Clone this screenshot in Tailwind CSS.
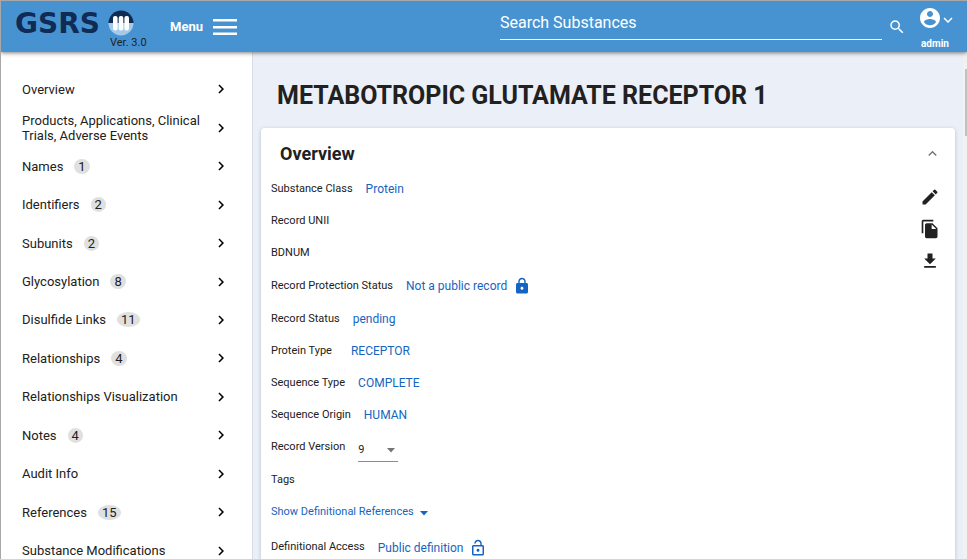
<!DOCTYPE html>
<html lang="en">
<head>
<meta charset="utf-8">
<meta name="viewport" content="width=device-width, initial-scale=1">
<title>GSRS - Metabotropic Glutamate Receptor 1</title>
<script src="https://cdn.jsdelivr.net/npm/@tailwindcss/browser@4"></script>
</head>
<body class="flex h-screen flex-col overflow-hidden border-t border-l border-[#a8a8a8] bg-[#ebeff7] font-['Roboto',sans-serif] text-[13px] text-[#212121]">
<svg class="hidden" aria-hidden="true">
  <symbol id="chevron" viewBox="0 0 24 24"><path d="M10 6 8.59 7.41 13.17 12l-4.58 4.59L10 18l6-6z"/></symbol>
</svg>
<header class="relative z-10 flex h-[51px] shrink-0 bg-[#4793d1] pr-[7px] pl-[14px] text-white shadow-[0_1px_4px_rgba(0,0,0,0.5)]">
  <a href="#" class="flex w-[155px] flex-col text-[#102b54]">
    <span class="flex h-[36px] items-center gap-[8px] pt-[7px]">
      <span class="pt-[2px] font-['DejaVu_Sans',sans-serif] text-[28px] leading-[30px] font-bold">GSRS</span>
      <svg class="size-[26px]" viewBox="0 0 26 26" aria-hidden="true">
        <path d="M0.5 13a12.5 12.5 0 0 1 25 0z" fill="#102b54"/>
        <path d="M0.5 13a12.5 12.5 0 0 0 25 0z" fill="#a3cae8"/>
        <g fill="#fff"><rect x="5" y="6" width="4.6" height="14.5" rx="2"/><rect x="10.7" y="6" width="4.6" height="14.5" rx="2"/><rect x="16.4" y="6" width="4.6" height="14.5" rx="2"/></g>
      </svg>
    </span>
    <span class="pl-[95px] text-[11px] leading-[12px] text-[#212121]">Ver. 3.0</span>
  </a>
  <button type="button" class="flex items-center gap-[10px] text-[13px] font-bold">Menu
    <svg class="h-[18px] w-6" viewBox="0 0 24 18" fill="#fff" aria-hidden="true"><path d="M0 1h24v2.500H0zM0 8h24v2.500H0zM0 14.500h24v2.500H0z"/></svg>
  </button>
  <form class="ml-auto flex w-[407px] items-start gap-[6px] pt-[9px]">
    <input type="search" aria-label="Search Substances" placeholder="Search Substances" class="h-[30px] min-w-0 flex-1 border-b border-white bg-transparent pb-[5px] text-[16px] text-white outline-none placeholder:text-white">
    <button type="submit" aria-label="Search" class="mt-[8px] mr-px">
      <svg class="size-[18px]" viewBox="0 0 24 24" fill="#fff"><path d="M15.5 14h-.79l-.28-.27A6.47 6.47 0 0 0 16 9.5 6.5 6.5 0 1 0 9.5 16c1.61 0 3.09-.59 4.23-1.57l.27.28v.79l5 4.99L20.49 19zm-6 0C7.01 14 5 11.99 5 9.5S7.01 5 9.5 5 14 7.01 14 9.5 11.99 14 9.5 14"/></svg>
    </button>
  </form>
  <button type="button" class="ml-[11px] flex w-[42px] flex-col items-start pt-[5px]">
    <span class="flex items-center">
      <svg class="size-6" viewBox="0 0 24 24" fill="#fff" aria-hidden="true"><path d="M12 2C6.48 2 2 6.48 2 12s4.48 10 10 10 10-4.48 10-10S17.52 2 12 2m0 3c1.66 0 3 1.34 3 3s-1.34 3-3 3-3-1.34-3-3 1.34-3 3-3m0 14.2a7.2 7.2 0 0 1-6-3.22c.03-1.99 4-3.08 6-3.08 1.99 0 5.97 1.09 6 3.08a7.2 7.2 0 0 1-6 3.22"/></svg>
      <svg class="mt-[4px] -ml-[3px] size-[18px] rotate-90" fill="#fff" aria-hidden="true"><use href="#chevron"/></svg>
    </span>
    <span class="pt-[7px] pl-[3px] text-[10px] leading-[14px] font-bold">admin</span>
  </button>
</header>
<div class="flex min-h-0 flex-1">
  <aside class="w-[252px] shrink-0 overflow-hidden border-r border-[#d8dce4] bg-white">
    <nav aria-label="Record sections" class="mt-[18px] grid h-[500px] auto-rows-fr pr-[22px] pl-[21px] leading-[15px]">
      <a href="#" class="flex items-center">Overview<svg class="ml-auto size-[18px]" aria-hidden="true"><use href="#chevron"/></svg></a>
      <a href="#" class="flex items-center"><span class="w-[180px]">Products, Applications, Clinical Trials, Adverse Events</span><svg class="ml-auto size-[18px]" aria-hidden="true"><use href="#chevron"/></svg></a>
      <a href="#" class="flex items-center gap-[11px]">Names<span class="rounded-[50%] bg-[#e0e0e0] px-1">1</span><svg class="ml-auto size-[18px]" aria-hidden="true"><use href="#chevron"/></svg></a>
      <a href="#" class="flex items-center gap-[11px]">Identifiers<span class="rounded-[50%] bg-[#e0e0e0] px-1">2</span><svg class="ml-auto size-[18px]" aria-hidden="true"><use href="#chevron"/></svg></a>
      <a href="#" class="flex items-center gap-[11px]">Subunits<span class="rounded-[50%] bg-[#e0e0e0] px-1">2</span><svg class="ml-auto size-[18px]" aria-hidden="true"><use href="#chevron"/></svg></a>
      <a href="#" class="flex items-center gap-[11px]">Glycosylation<span class="rounded-[50%] bg-[#e0e0e0] px-1">8</span><svg class="ml-auto size-[18px]" aria-hidden="true"><use href="#chevron"/></svg></a>
      <a href="#" class="flex items-center gap-[11px]">Disulfide Links<span class="rounded-[50%] bg-[#e0e0e0] px-1">11</span><svg class="ml-auto size-[18px]" aria-hidden="true"><use href="#chevron"/></svg></a>
      <a href="#" class="flex items-center gap-[11px]">Relationships<span class="rounded-[50%] bg-[#e0e0e0] px-1">4</span><svg class="ml-auto size-[18px]" aria-hidden="true"><use href="#chevron"/></svg></a>
      <a href="#" class="flex items-center">Relationships Visualization<svg class="ml-auto size-[18px]" aria-hidden="true"><use href="#chevron"/></svg></a>
      <a href="#" class="flex items-center gap-[11px]">Notes<span class="rounded-[50%] bg-[#e0e0e0] px-1">4</span><svg class="ml-auto size-[18px]" aria-hidden="true"><use href="#chevron"/></svg></a>
      <a href="#" class="flex items-center">Audit Info<svg class="ml-auto size-[18px]" aria-hidden="true"><use href="#chevron"/></svg></a>
      <a href="#" class="flex items-center gap-[11px]">References<span class="rounded-[50%] bg-[#e0e0e0] px-1">15</span><svg class="ml-auto size-[18px]" aria-hidden="true"><use href="#chevron"/></svg></a>
      <a href="#" class="flex items-center">Substance Modifications<svg class="ml-auto size-[18px]" aria-hidden="true"><use href="#chevron"/></svg></a>
    </nav>
  </aside>
  <main class="min-w-0 flex-1 overflow-hidden px-2">
    <h1 class="px-4 pt-[28px] pb-[16px] text-[25px] leading-[32px] font-bold">METABOTROPIC GLUTAMATE RECEPTOR 1</h1>
    <section class="rounded bg-white pb-8 shadow-[0_1px_4px_rgba(0,0,0,0.2)]">
      <div class="flex h-[45px] items-center justify-between pt-[6px] pr-[14px] pl-[19px]">
        <h2 class="text-[18px] font-bold">Overview</h2>
        <button type="button" aria-label="Collapse overview"><svg class="size-[17px] -rotate-90" fill="#757575"><use href="#chevron"/></svg></button>
      </div>
      <div class="flex justify-between pr-[15px] pl-[10px]">
        <dl class="text-[11px] [&_dd]:text-[12px] [&_dd]:text-[#1565c0] [&>div]:flex [&>div]:h-8 [&>div]:items-center [&>div]:gap-[13px]">
          <div><dt>Substance Class</dt><dd>Protein</dd></div>
          <div><dt>Record UNII</dt></div>
          <div><dt>BDNUM</dt></div>
          <div class="h-[34px]!"><dt>Record Protection Status</dt><dd class="flex items-center gap-[6px]">Not a public record
            <svg class="size-[18px]" viewBox="0 0 24 24" fill="#1565c0" aria-hidden="true"><path d="M18 8h-1V6c0-2.76-2.24-5-5-5S7 3.240 7 6v2H6c-1.100 0-2 .9-2 2v10c0 1.100.9 2 2 2h12c1.100 0 2-.9 2-2V10c0-1.100-.9-2-2-2m-6 9c-1.100 0-2-.9-2-2s.9-2 2-2 2 .9 2 2-.9 2-2 2m3.100-9H8.900V6c0-1.710 1.390-3.100 3.100-3.100s3.100 1.390 3.100 3.100z"/></svg></dd></div>
          <div><dt>Record Status</dt><dd>pending</dd></div>
          <div><dt>Protein Type</dt><dd class="pl-[6px]">RECEPTOR</dd></div>
          <div><dt>Sequence Type</dt><dd>COMPLETE</dd></div>
          <div><dt>Sequence Origin</dt><dd>HUMAN</dd></div>
          <div class="h-[33px]!"><dt><label for="version">Record Version</label></dt><dd class="relative pt-[6px] text-[#212121]!">
            <select id="version" class="h-[22px] w-[40px] appearance-none border-b border-[#8c8c8c] bg-transparent text-[11px]"><option>9</option></select>
            <svg class="pointer-events-none absolute top-[14px] right-[3px] h-[5px] w-[8px]" viewBox="0 0 8 5" fill="#757575" aria-hidden="true"><path d="M0 0h8L4 4.500z"/></svg></dd></div>
          <div><dt>Tags</dt></div>
          <div><dt class="text-[#1565c0]"><button type="button" class="flex items-center gap-[6px]">Show Definitional References<svg class="mt-[3px] h-[5px] w-[8px]" viewBox="0 0 8 5" fill="#1565c0" aria-hidden="true"><path d="M0 0h8L4 4.500z"/></svg></button></dt></div>
          <div class="h-[38px]!"><dt>Definitional Access</dt><dd class="flex items-center gap-[6px] pt-[2px]">Public definition
            <svg class="size-[18px]" viewBox="0 0 24 24" fill="#1565c0" aria-hidden="true"><path d="M12 17c1.100 0 2-.9 2-2s-.9-2-2-2-2 .9-2 2 .9 2 2 2m6-9h-1V6c0-2.760-2.240-5-5-5S7 3.240 7 6h1.900c0-1.710 1.390-3.100 3.100-3.100s3.100 1.390 3.100 3.100v2H6c-1.100 0-2 .9-2 2v10c0 1.100.9 2 2 2h12c1.100 0 2-.9 2-2V10c0-1.100-.9-2-2-2m0 12H6V10h12z"/></svg></dd></div>
        </dl>
        <div class="flex flex-col gap-[12px] pt-[14px]">
          <button type="button" aria-label="Edit" class="size-5"><svg class="size-5" viewBox="0 0 24 24" fill="#212121"><path d="M3 17.250V21h3.750L17.810 9.940l-3.750-3.750zM20.710 7.040a1 1 0 0 0 0-1.410l-2.340-2.340a1 1 0 0 0-1.410 0l-1.830 1.830 3.750 3.750z"/></svg></button>
          <button type="button" aria-label="Copy" class="size-5"><svg class="size-5" viewBox="0 0 24 24" fill="#212121"><path d="M16 1H4c-1.100 0-2 .9-2 2v14h2V3h12zm-1 4 6 6v10c0 1.100-.9 2-2 2H7.990C6.890 23 6 22.100 6 21l.01-14c0-1.100.89-2 1.990-2zm-1 7h5.500L14 6.500z"/></svg></button>
          <button type="button" aria-label="Download" class="size-5"><svg class="size-5" viewBox="0 0 24 24" fill="#212121"><path d="M19 9h-4V3H9v6H5l7 7zM5 18v2h14v-2z"/></svg></button>
        </div>
      </div>
    </section>
  </main>
  <div class="w-1 shrink-0 bg-[#f1f1f1] pt-[17px] pl-[2px]" aria-hidden="true"><div class="h-[67px] bg-[#c1c1c1]"></div></div>
</div>
</body>
</html>
